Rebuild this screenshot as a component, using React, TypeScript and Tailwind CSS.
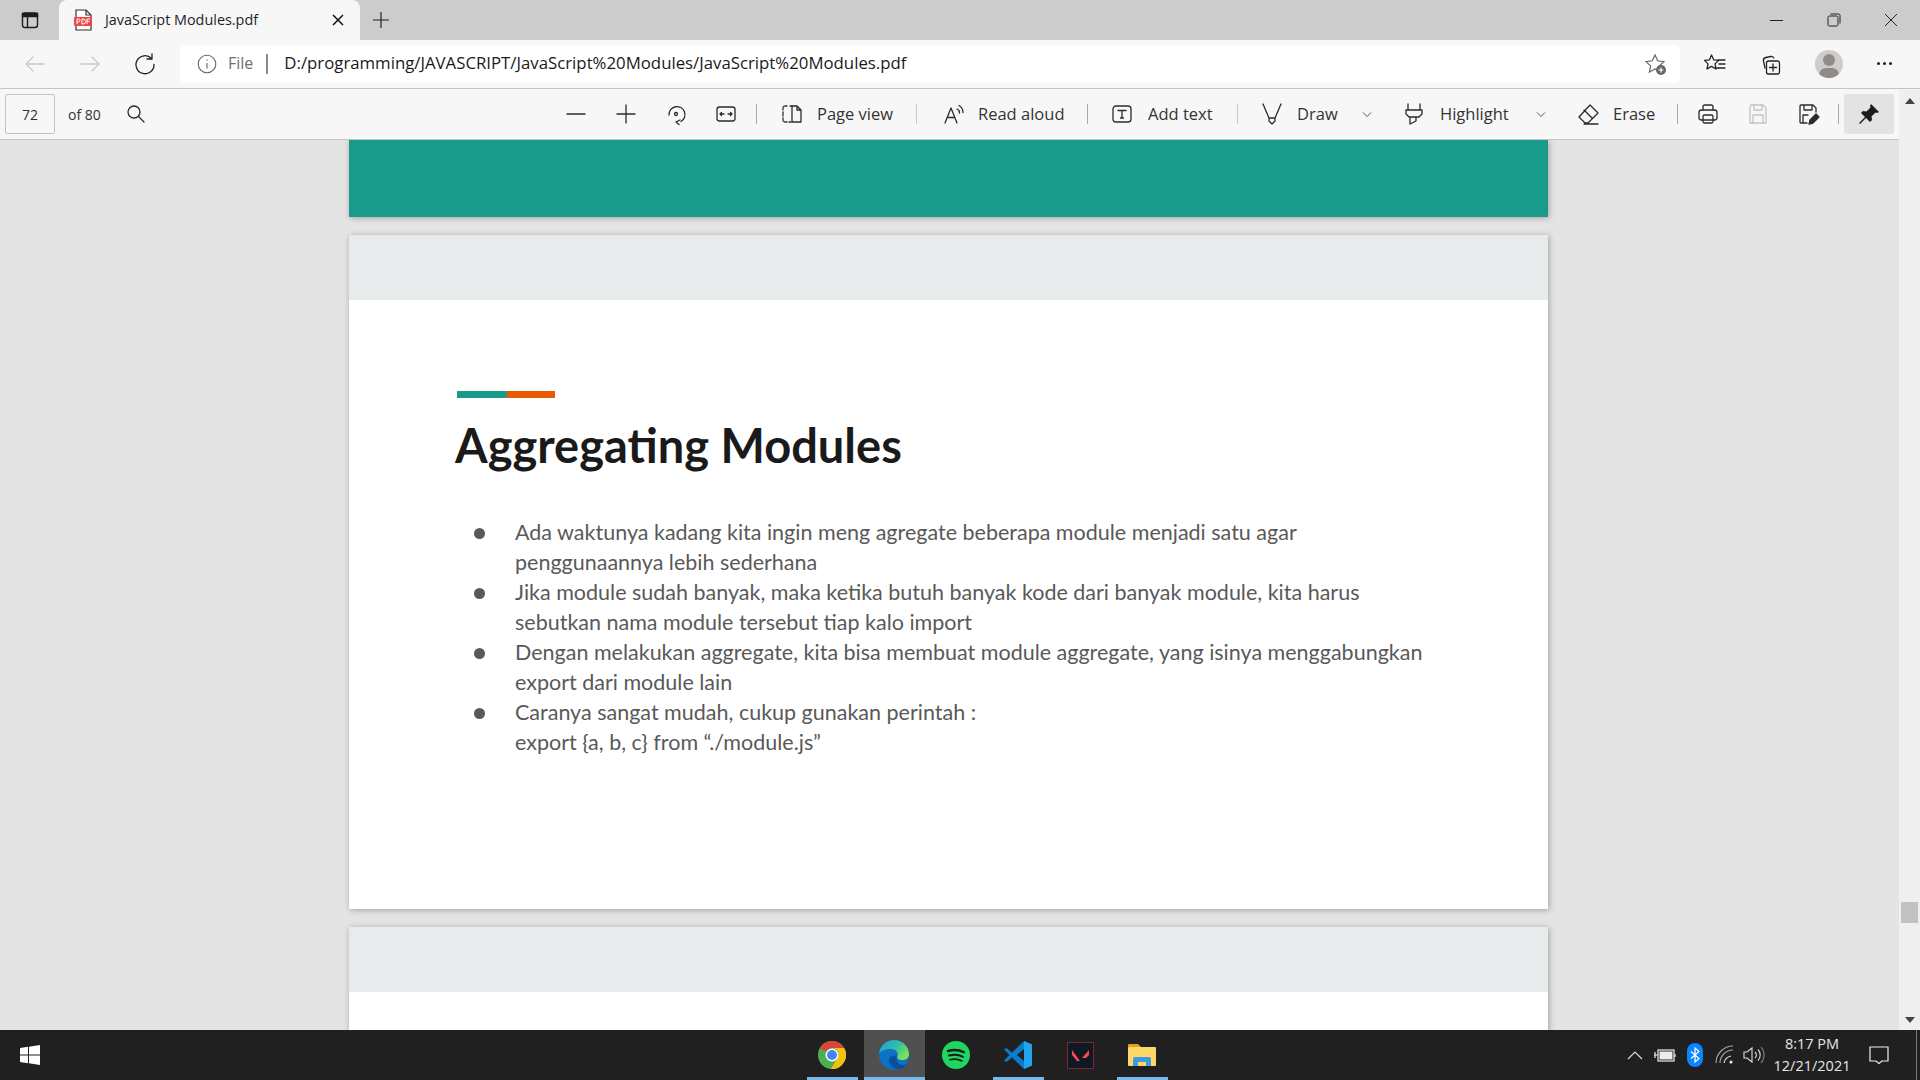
import React from 'react'

const Ico = (props: { s?: number; c?: string; w?: number; children: React.ReactNode; cls?: string }) => (
  <svg width={props.s ?? 24} height={props.s ?? 24} viewBox="0 0 24 24" fill="none" stroke={props.c ?? '#2b2b2b'} strokeWidth={props.w ?? 1.3} strokeLinecap="round" strokeLinejoin="round" className={props.cls}>
    {props.children}
  </svg>
)

const IconBtn = ({ children }: { children: React.ReactNode }) => (
  <div className="w-[50px] h-[50px] flex items-center justify-center shrink-0">{children}</div>
)

const Sep = ({ ml = 'ml-[5px]' }: { ml?: string }) => <div className={`w-px h-[20px] bg-[#a9a9a9] shrink-0 ${ml}`} />

const Chevron = ({ cls }: { cls: string }) => (
  <svg width="16" height="16" viewBox="0 0 16 16" fill="none" stroke="#555" strokeWidth="1" className={`shrink-0 ${cls}`}>
    <path d="M4 6.5l4 4 4-4" />
  </svg>
)

const bullets = [
  ['Ada waktunya kadang kita ingin meng agregate beberapa module menjadi satu agar', 'penggunaannya lebih sederhana'],
  ['Jika module sudah banyak, maka ketika butuh banyak kode dari banyak module, kita harus', 'sebutkan nama module tersebut tiap kalo import'],
  ['Dengan melakukan aggregate, kita bisa membuat module aggregate, yang isinya menggabungkan', 'export dari module lain'],
  ['Caranya sangat mudah, cukup gunakan perintah :', 'export {a, b, c} from “./module.js”'],
]

const TabStrip = () => (
  <div className="h-[40px] bg-[#cccccc] flex items-end shrink-0">
    <div className="w-[59px] h-[40px] flex items-center justify-center shrink-0">
      <svg width="20" height="20" viewBox="0 0 20 20" fill="none" stroke="#1c1c1c" strokeWidth="1.4">
        <rect x="2.5" y="3" width="15" height="14.5" rx="2.5" />
        <path d="M2.5 3.5h15v3h-15z" fill="#1c1c1c" />
        <path d="M7.5 6v11" />
      </svg>
    </div>
    <div className="w-[301px] h-[40px] bg-[#f7f7f7] rounded-t-lg flex items-center pl-[14px] shrink-0">
      <svg width="20" height="22" viewBox="0 0 20 22" className="shrink-0">
        <path d="M3 1h10l5 5v15H3z" fill="#fff" stroke="#333" strokeWidth="1.2" />
        <path d="M13 1v5h5" fill="none" stroke="#333" strokeWidth="1.2" />
        <rect x="1" y="8" width="18" height="9" rx="1" fill="#f04848" />
        <path d="M4 15v-5h1.6a1.3 1.3 0 010 2.8H4M9 10v5h1a2.5 2.5 0 000-5zM14 15v-5h3M14 12.4h2.4" fill="none" stroke="#fff" strokeWidth="1" />
      </svg>
      <span className="ml-[12px] text-[14.4px] leading-[20px] mb-[1px] text-[#1f1f1f] font-['Open_Sans',sans-serif] w-[220px] whitespace-nowrap">JavaScript Modules.pdf</span>
      <svg width="14" height="14" viewBox="0 0 14 14" stroke="#111" strokeWidth="1.5" className="ml-[6px]">
        <path d="M2 2l10 10M12 2L2 12" />
      </svg>
    </div>
    <div className="w-[42px] h-[40px] flex items-center justify-center shrink-0">
      <svg width="18" height="18" viewBox="0 0 18 18" stroke="#222" strokeWidth="1.2"><path d="M9 1v16M1 9h16" /></svg>
    </div>
    <div className="ml-auto h-[40px] pr-[1px] flex items-center">
      <div className="w-[57px] flex justify-center"><div className="w-[13px] h-px bg-[#222]" /></div>
      <div className="w-[57px] flex justify-center">
        <svg width="14" height="14" viewBox="0 0 14 14" fill="none" stroke="#222" strokeWidth="1">
          <rect x="1" y="3" width="10" height="10" rx="1.5" /><path d="M3.5 1h8a1.5 1.5 0 011.5 1.5v8" />
        </svg>
      </div>
      <div className="w-[57px] pl-[1px] flex justify-center">
        <svg width="14" height="14" viewBox="0 0 14 14" stroke="#222" strokeWidth="1"><path d="M1 1l12 12M13 1L1 13" /></svg>
      </div>
    </div>
  </div>
)

const AddressBar = () => (
  <div className="h-[49px] bg-[#f7f7f7] border-b border-[#c4c4c4] flex items-center shrink-0">
    <div className="w-[180px] flex items-center shrink-0">
      <Ico c="#c8c8c8" cls="ml-[23px]"><path d="M21 12H3M10 5l-7 7 7 7" /></Ico>
      <Ico c="#c8c8c8" cls="ml-[31px]"><path d="M3 12h18M14 5l7 7-7 7" /></Ico>
      <Ico c="#222" cls="ml-[31px]"><path d="M18.5 6.5A9 9 0 1 0 21 12.5M19 2v5h-5" /></Ico>
    </div>
    <div className="w-[1500px] h-[38px] bg-white rounded-md flex items-center relative shrink-0 font-['Open_Sans',sans-serif]">
      <svg width="20" height="20" viewBox="0 0 20 20" fill="none" stroke="#666" strokeWidth="1.1" className="ml-[17px]">
        <circle cx="10" cy="10" r="8.8" /><path d="M10 9v5.5M10 5.5v1.2" />
      </svg>
      <span className="ml-[11px] text-[16px] leading-[24px] mb-[2px] text-[#6f6f6f]">File</span>
      <div className="ml-[13px] w-[2px] h-[20px] bg-[#8a8a8a]" />
      <span className="ml-[16px] text-[16.8px] leading-[24px] mb-[2px] text-[#1a1a1a] whitespace-nowrap">D:/programming/JAVASCRIPT/JavaScript%20Modules/JavaScript%20Modules.pdf</span>
      <svg width="24" height="24" viewBox="0 0 24 24" fill="none" stroke="#666" strokeWidth="1.2" className="absolute right-[13px] top-[7px]">
        <path d="M12 3l2.7 5.8 6.3.8-4.6 4.3 1.2 6.3L12 17l-5.6 3.2 1.2-6.3L3 9.6l6.3-.8z" />
        <circle cx="18" cy="18" r="5" fill="#666" stroke="none" />
        <path d="M18 15.5v5M15.5 18h5" stroke="#fff" />
      </svg>
    </div>
    <div className="flex items-center ml-[23px] mb-[1px]">
      <Ico c="#222"><path d="M8.5 3l2.200 4.800 5 .6-3.700 3.500 1 5.100-4.500-2.600L4 17l1-5.100L1.500 8.400l5-.6zM15 8h7M16 12h6M14 16h8" /></Ico>
      <Ico c="#222" cls="ml-[31px]"><path d="M7 16l-1.500-7a3 3 0 0 1 2.300-3.500l5-1a3 3 0 0 1 3 1.500" /><rect x="8.500" y="9" width="13" height="13" rx="2" /><path d="M15 12v7M11.500 15.500h7" /></Ico>
      <div className="ml-[33px] w-[28px] h-[28px] rounded-full bg-[#cfcdc9] overflow-hidden relative shrink-0">
        <div className="absolute left-[8px] top-[4px] w-[12px] h-[12px] rounded-full bg-[#8f8b87]" />
        <div className="absolute left-[4px] top-[18px] w-[20px] h-[14px] rounded-full bg-[#8f8b87]" />
      </div>
      <div className="ml-[34px] flex gap-[3px]">
        <div className="w-[3px] h-[3px] rounded-full bg-[#222]" />
        <div className="w-[3px] h-[3px] rounded-full bg-[#222]" />
        <div className="w-[3px] h-[3px] rounded-full bg-[#222]" />
      </div>
    </div>
  </div>
)

const PdfToolbar = () => (
  <div className="h-[51px] bg-[#f7f7f7] border-b border-[#c4c4c4] flex items-center shrink-0 font-['Open_Sans',sans-serif] text-[16.5px] text-[#333] whitespace-nowrap">
    <div className="ml-[5px] w-[50px] h-[40px] border border-[#c2c2c2] rounded-[2px] flex items-center justify-center text-[14px] shrink-0">72</div>
    <span className="ml-[13px] w-[34px] text-[14px] shrink-0">of 80</span>
    <Ico cls="ml-[22px] shrink-0"><circle cx="10" cy="10" r="6" /><path d="M14.500 14.500L20 20" /></Ico>
    <div className="ml-[403px] flex items-center shrink-0">
      <IconBtn><Ico><path d="M3 12h18" /></Ico></IconBtn>
      <IconBtn><Ico><path d="M12 3v18M3 12h18" /></Ico></IconBtn>
      <IconBtn><Ico><path d="M5 13a8 8 0 1 1 12 6.500M12 20l3 2.500M12 20l4-2" /><circle cx="12" cy="12" r="1.500" /></Ico></IconBtn>
      <IconBtn><Ico><rect x="3" y="5" width="18" height="14" rx="2.500" /><path d="M6 12h4M6 12l1.500-1.500M6 12l1.500 1.500M18 12h-4M18 12l-1.500-1.500M18 12l-1.500 1.500" /></Ico></IconBtn>
    </div>
    <Sep />
    <Ico cls="ml-[23px] shrink-0"><path d="M12 4H9M7 4H5a2 2 0 0 0-2 2v2M3 10v4M3 16v2a2 2 0 0 0 2 2h2M9 20h3" strokeDasharray="2 1" /><path d="M12 4h5l4 4v12h-9zM17 4v4h4" /></Ico>
    <span className="ml-[13px] w-[77px] shrink-0">Page view</span>
    <div className="ml-[22px] w-px h-[20px] bg-[#c8c8c8] shrink-0" />
    <Ico cls="ml-[24px] shrink-0"><path d="M4 21l6-15 6 15M6.500 15.500h7M16 7a4 4 0 0 1 2.500 4M18 3.500a8 8 0 0 1 4 7" /></Ico>
    <span className="ml-[13px] w-[86px] shrink-0">Read aloud</span>
    <Sep ml="ml-[23px]" />
    <Ico cls="ml-[22px] shrink-0"><rect x="3" y="4" width="18" height="16" rx="3" /><path d="M8 8.500h8M12 8.500v7.500M10.500 16h3" /></Ico>
    <span className="ml-[14px] w-[65px] shrink-0">Add text</span>
    <div className="ml-[24px] w-px h-[20px] bg-[#c8c8c8] shrink-0" />
    <Ico cls="ml-[22px] shrink-0"><path d="M3 2l6 14v3l3 3 3-3v-3l6-14M9 16h6" /></Ico>
    <span className="ml-[13px] w-[40px] shrink-0">Draw</span>
    <Chevron cls="ml-[22px]" />
    <Ico cls="ml-[27px] shrink-0"><path d="M6 2v6h12V2M4 8h16v4l-3 3H7l-3-3zM8 15v7l6-3v-4" /></Ico>
    <span className="ml-[14px] w-[71px] shrink-0">Highlight</span>
    <Chevron cls="ml-[22px]" />
    <Ico cls="ml-[27px] shrink-0"><path d="M14 3l8 8-10 10H9l-6-6zM8 8l8 8M8 22h14" /></Ico>
    <span className="ml-[13px] w-[41px] shrink-0">Erase</span>
    <Sep ml="ml-[23px]" />
    <div className="ml-[5px] flex items-center shrink-0">
      <IconBtn><Ico><path d="M7 8V5a2 2 0 0 1 2-2h6a2 2 0 0 1 2 2v3" /><rect x="3" y="8" width="18" height="10" rx="2.500" /><rect x="7" y="13" width="10" height="8" rx="1.500" /></Ico></IconBtn>
      <IconBtn><Ico c="#c4c4c4"><path d="M5 3h12l3 3v15H4V4z" /><path d="M8 3v5h8V3M7 21v-8h10v8" /></Ico></IconBtn>
      <IconBtn><Ico><path d="M11 21H5a1 1 0 0 1-1-1V4a1 1 0 0 1 1-1h12l3 3v4M8 3v5h8V3M7 21v-8h5" /><path d="M13 22l1-4 6-6 3 3-6 6z" fill="#2b2b2b" /></Ico></IconBtn>
    </div>
    <Sep />
    <div className="ml-[5px] w-[50px] h-[40px] bg-[#e3e3e3] rounded-[2px] flex items-center justify-center shrink-0">
      <svg width="24" height="24" viewBox="0 0 24 24" fill="#1c1c1c"><path d="M14 2l8 8-2 1-1.500-.5-4 4 .5 3.500-2 2-4-4-6 6-1-1 6-6-4-4 2-2 3.500.5 4-4-.5-1.500z" /></svg>
    </div>
  </div>
)

const PageHead = () => <div className="h-[65px] bg-[#e7ebec]" />

const PdfPages = () => (
  <div className="flex-1 min-h-0 bg-[#e4e4e4] overflow-hidden pl-[349px]">
    <div className="w-[1199px] h-[77px] bg-[#1a9a8a] shadow-[1px_1px_6px_rgba(0,0,0,0.3)]" />
    <div className="w-[1199px] h-[674px] mt-[18px] bg-white shadow-[1px_1px_6px_rgba(0,0,0,0.3)]">
      <PageHead />
      <div className="ml-[108px] mt-[91px] w-[98px] h-[7px] flex">
        <div className="w-[50px] bg-[#1a9a8a]" />
        <div className="flex-1 bg-[#ea5a00]" />
      </div>
      <h1 className="ml-[106px] mt-[17px] text-[47px] leading-[60px] font-bold text-[#1a1a1a] font-['Lato',sans-serif]">Aggregating Modules</h1>
      <ul className="mt-[42px] ml-[125px] font-['Lato',sans-serif] text-[21.5px] leading-[30px] text-[#595959]">
        {bullets.map((lines, i) => (
          <li key={i} className="flex">
            <div className="w-[11px] h-[11px] mt-[11px] rounded-full bg-[#595959] shrink-0" />
            <div className="ml-[30px] whitespace-nowrap">
              {lines[0]}<br />{lines[1]}
            </div>
          </li>
        ))}
      </ul>
    </div>
    <div className="w-[1199px] h-[200px] mt-[18px] bg-white shadow-[1px_1px_6px_rgba(0,0,0,0.3)]">
      <PageHead />
    </div>
  </div>
)

const Scrollbar = () => (
  <div className="w-[21px] bg-[#efefef] flex flex-col items-center shrink-0">
    <div className="mt-[9px] w-0 h-0 border-x-[5px] border-x-transparent border-b-[6px] border-b-[#444]" />
    <div className="mt-[798px] w-[17px] h-[21px] bg-[#c1c1c1]" />
    <div className="mt-[94px] w-0 h-0 border-x-[5px] border-x-transparent border-t-[6px] border-t-[#444]" />
  </div>
)

const Chrome = () => (
  <svg width="28" height="28" viewBox="0 0 28 28">
    <circle cx="14" cy="14" r="14" fill="#4caf50" />
    <path d="M14 0a14 14 0 0 1 12.100 7H14a7 7 0 0 0-6.100 3.500L1.900 7A14 14 0 0 1 14 0z" fill="#db4437" />
    <path d="M26.100 7A14 14 0 0 1 13 28l6-10.500A7 7 0 0 0 20 10.500 7 7 0 0 0 14 7z" fill="#f4c20d" />
    <circle cx="14" cy="14" r="6.500" fill="#fff" />
    <circle cx="14" cy="14" r="5" fill="#4285f4" />
  </svg>
)

const Edge = () => (
  <svg width="30" height="30" viewBox="0 0 30 30">
    <defs>
      <linearGradient id="edgeTop" x1="0" y1="0" x2="1" y2="0.600">
        <stop offset="0" stopColor="#1b9de2" />
        <stop offset="0.600" stopColor="#35c1a0" />
        <stop offset="1" stopColor="#7fe05a" />
      </linearGradient>
    </defs>
    <circle cx="15" cy="15" r="15" fill="#0c72c4" />
    <path d="M0 14C1 5 8 0 15 0c9 0 15 7 15 14 0 4-3 6-7 6-3 0-5-1-5-3 2-3 0-8-6-8C6 9 1 11 0 14z" fill="url(#edgeTop)" />
    <path d="M10 20c0 6 5 9 10 9 3 0 6-2 8-5-3 2-9 1-10-3-1-3 0-5 0-5-3-1-8 0-8 4z" fill="#0a4f9e" />
  </svg>
)

const Spotify = () => (
  <svg width="28" height="28" viewBox="0 0 28 28" fill="none">
    <circle cx="14" cy="14" r="14" fill="#1ed760" />
    <path d="M6 10c5-1.500 11-1.300 16 1.300" stroke="#1a1a1a" strokeWidth="2.400" strokeLinecap="round" />
    <path d="M7 14.500c4.500-1.200 10-.9 14 1.300" stroke="#1a1a1a" strokeWidth="2" strokeLinecap="round" />
    <path d="M8 18.700c4-1 8.500-.7 12 1.200" stroke="#1a1a1a" strokeWidth="1.700" strokeLinecap="round" />
  </svg>
)

const VsCode = () => (
  <svg width="30" height="30" viewBox="0 0 30 30">
    <path d="M21 1l8 3.500v21L21 29 9 17.500 3.500 22 1 20.500 6.500 15 1 9.500 3.500 8 9 12.500z" fill="#0a7ccb" />
    <path d="M21 1l8 3.500v21L21 29z" fill="#22a3ee" />
    <path d="M21 9l-7 6 7 6z" fill="#202020" />
  </svg>
)

const Valorant = () => (
  <div className="w-[27px] h-[27px] bg-[#0f1923] border border-[#7a2733] flex items-center justify-center">
    <svg width="17" height="13" viewBox="0 0 17 13" fill="#ff4655">
      <path d="M0 1l8 11H5L0 6zM17 1v5l-3 3H10z" />
    </svg>
  </div>
)

const Folder = () => (
  <svg width="28" height="24" viewBox="0 0 28 24">
    <path d="M0 2a1 1 0 0 1 1-1h9l3 3h-13z" fill="#e0a21c" />
    <rect y="4" width="28" height="19" rx="1" fill="#ffd767" />
    <path d="M5 23v-7a2 2 0 0 1 2-2h14a2 2 0 0 1 2 2v7h-5v-4h-8v4z" fill="#3b9be0" />
  </svg>
)

const TaskItem = ({ w, bg, line, children, cls }: { w: string; bg?: string; line?: boolean; children: React.ReactNode; cls?: string }) => (
  <div className={`relative h-[50px] flex items-center justify-center shrink-0 ${w} ${bg ?? ''} ${cls ?? ''}`}>
    {children}
    {line && <div className="absolute left-0 right-0 bottom-0 h-[3px] bg-[#76b9ed]" />}
  </div>
)

const Taskbar = () => (
  <div className="h-[50px] bg-[#202020] flex items-center shrink-0 text-white font-['Open_Sans',sans-serif]">
    <svg width="20" height="20" viewBox="0 0 20 20" fill="#fff" className="ml-[20px] shrink-0">
      <path d="M0 3l8-1.200V9.500H0zM9 1.700L20 0v9.500H9zM0 10.500h8v7.700L0 17zM9 10.500h11V20L9 18.300z" />
    </svg>
    <div className="ml-[767px] flex items-center shrink-0">
      <TaskItem w="w-[51px]" line cls="pr-[1px]"><Chrome /></TaskItem>
      <div className="w-[6px]" />
      <TaskItem w="w-[61px]" bg="bg-[#505050]" line cls="pr-[1px]"><Edge /></TaskItem>
      <TaskItem w="w-[62px]"><Spotify /></TaskItem>
      <div className="w-[6px]" />
      <TaskItem w="w-[51px]" line cls="pr-[1px]"><VsCode /></TaskItem>
      <div className="w-[11px]" />
      <TaskItem w="w-[51px]" cls="pr-[1px]"><Valorant /></TaskItem>
      <div className="w-[11px]" />
      <TaskItem w="w-[51px]" line cls="pr-[1px]"><Folder /></TaskItem>
    </div>
    <svg width="16" height="10" viewBox="0 0 16 10" fill="none" stroke="#ddd" strokeWidth="1.200" className="ml-[459px] shrink-0"><path d="M1 9l7-7 7 7" /></svg>
    <svg width="22" height="14" viewBox="0 0 22 14" fill="none" stroke="#eee" strokeWidth="1.200" className="ml-[11px] shrink-0">
      <rect x="4" y="2" width="16" height="11" /><rect x="5.500" y="3.500" width="13" height="8" fill="#eee" stroke="none" /><path d="M21 6v3M0 7h4M1 4v6" />
    </svg>
    <div className="ml-[11px] w-[16px] h-[24px] rounded-full bg-[#0a84ff] flex items-center justify-center shrink-0">
      <svg width="10" height="16" viewBox="0 0 10 16" fill="none" stroke="#fff" strokeWidth="1.200"><path d="M1 4.500l8 7-4 3.500V1l4 3.500-8 7" /></svg>
    </div>
    <svg width="20" height="20" viewBox="0 0 20 20" fill="none" stroke="#ddd" strokeWidth="1.200" className="ml-[12px] shrink-0">
      <path d="M1 18A17 17 0 0 1 18 1M5 18A13 13 0 0 1 18 5" opacity="0.700" /><path d="M9 18a9 9 0 0 1 7-7" /><circle cx="16" cy="17" r="1.500" fill="#eee" stroke="none" />
    </svg>
    <svg width="22" height="20" viewBox="0 0 22 20" fill="none" stroke="#ddd" strokeWidth="1.100" className="ml-[8px] shrink-0">
      <path d="M1 7v6h3l5 4V3L4 7z" /><path d="M12 7a4 4 0 0 1 0 6M15 4.500a8 8 0 0 1 0 11" /><path d="M18 2a12 12 0 0 1 0 16" opacity="0.500" />
    </svg>
    <div className="ml-[3px] w-[88px] text-center text-[14.5px] leading-[22px] text-[#e6e6e6] shrink-0">
      <div>8:17 PM</div>
      <div>12/21/2021</div>
    </div>
    <svg width="20" height="20" viewBox="0 0 20 20" fill="none" stroke="#eee" strokeWidth="1.200" className="ml-[13px] shrink-0">
      <path d="M1 2h18v14h-6l-3 2.500L7 16H1z" />
    </svg>
    <div className="ml-[27px] w-px h-[50px] bg-[#777] shrink-0" />
  </div>
)

const App = () => {
  return (
    <div className="w-[1920px] h-[1080px] flex flex-col overflow-hidden">
      <TabStrip />
      <AddressBar />
      <div className="flex-1 min-h-0 flex">
        <div className="w-[1899px] flex flex-col">
          <PdfToolbar />
          <PdfPages />
        </div>
        <Scrollbar />
      </div>
      <Taskbar />
    </div>
  )
}

export default App
